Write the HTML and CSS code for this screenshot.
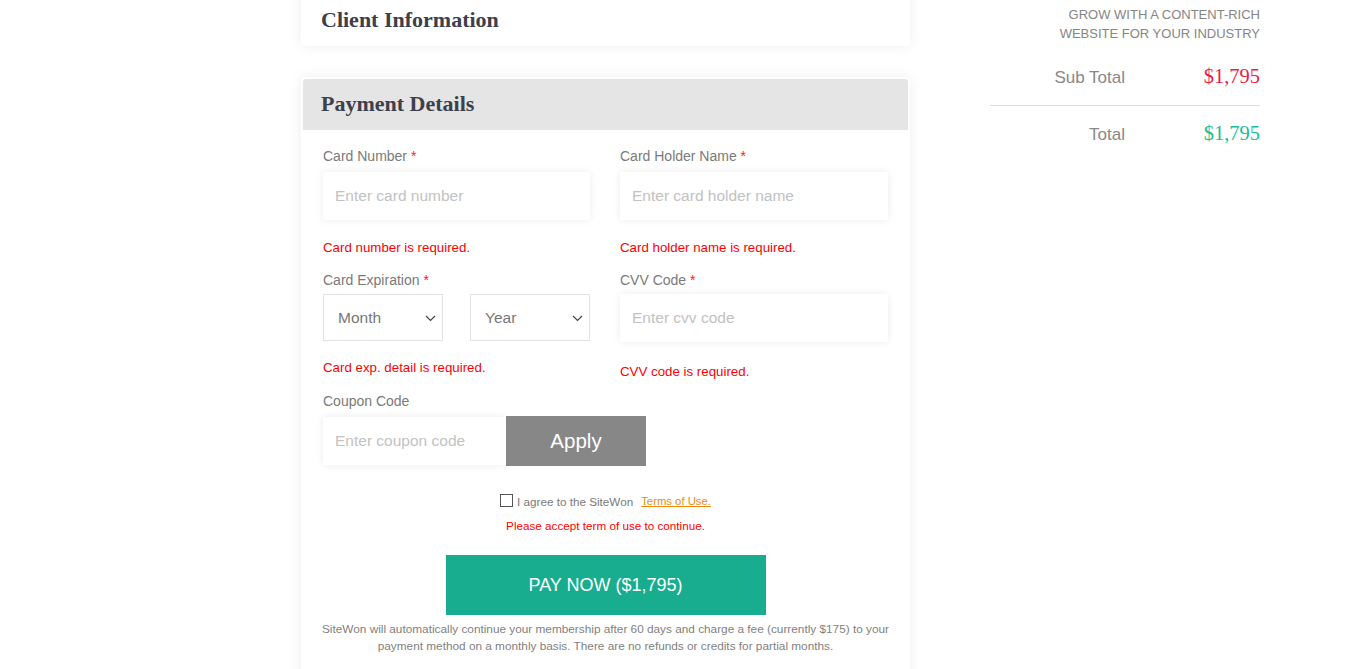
FILE: index.html
```html
<!DOCTYPE html>
<html lang="en">
<head>
<meta charset="utf-8">
<title>Checkout - Payment</title>
<link rel="stylesheet" href="styles.css">
</head>
<body>
<div class="page">
  <div class="main-col">
    <section class="card client-card">
      <h2 class="card-title">Client Information</h2>
    </section>

    <section class="card pay-card">
      <div class="pay-head">
        <h2 class="card-title">Payment Details</h2>
      </div>
      <div class="pay-body">
        <div class="grid">
          <div class="field">
            <label class="label">Card Number <span class="req">*</span></label>
            <input class="input" type="text" placeholder="Enter card number">
            <div class="error">Card number is required.</div>
          </div>
          <div class="field">
            <label class="label">Card Holder Name <span class="req">*</span></label>
            <input class="input" type="text" placeholder="Enter card holder name">
            <div class="error">Card holder name is required.</div>
          </div>
          <div class="field">
            <label class="label label-tight">Card Expiration <span class="req">*</span></label>
            <div class="selects">
              <div class="select">
                <span>Month</span>
                <svg class="chev" width="11" height="7" viewBox="0 0 11 7"><path d="M1 1 L5.5 5.5 L10 1" fill="none" stroke="#444" stroke-width="1.2"/></svg>
              </div>
              <div class="select">
                <span>Year</span>
                <svg class="chev" width="11" height="7" viewBox="0 0 11 7"><path d="M1 1 L5.5 5.5 L10 1" fill="none" stroke="#444" stroke-width="1.2"/></svg>
              </div>
            </div>
            <div class="error error-sel">Card exp. detail is required.</div>
          </div>
          <div class="field">
            <label class="label label-tight">CVV Code <span class="req">*</span></label>
            <input class="input" type="text" placeholder="Enter cvv code">
            <div class="error error-cvv">CVV code is required.</div>
          </div>
        </div>

        <div class="coupon">
          <label class="label label-coupon">Coupon Code</label>
          <div class="coupon-row">
            <input class="input coupon-input" type="text" placeholder="Enter coupon code">
            <button class="apply" type="button">Apply</button>
          </div>
        </div>

        <div class="agree">
          <span class="box"></span>
          <span class="agree-text">I agree to the SiteWon</span>
          <a class="terms" href="#">Terms of Use.</a>
        </div>
        <div class="agree-error">Please accept term of use to continue.</div>

        <button class="pay-btn" type="button">PAY NOW ($1,795)</button>
        <p class="note">SiteWon will automatically continue your membership after 60 days and charge a fee (currently $175) to your<br>payment method on a monthly basis. There are no refunds or credits for partial months.</p>
      </div>
    </section>
  </div>

  <aside class="side-col">
    <div class="plan">GROW WITH A CONTENT-RICH<br>WEBSITE FOR YOUR INDUSTRY</div>
    <div class="sum-row">
      <span class="sum-label">Sub Total</span>
      <span class="price price-sub">$1,795</span>
    </div>
    <div class="sum-row">
      <span class="sum-label">Total</span>
      <span class="price price-total">$1,795</span>
    </div>
  </aside>
</div>
</body>
</html>
```

FILE: styles.css
```css
* { box-sizing: border-box; }

html, body {
  margin: 0;
  padding: 0;
  background: #ffffff;
  font-family: "Liberation Sans", Arial, sans-serif;
  color: #777777;
  overflow: hidden;
}

.page {
  display: flex;
  align-items: flex-start;
  padding-left: 301px;
  gap: 80px;
  height: 669px;
}

.main-col {
  width: 609px;
  display: flex;
  flex-direction: column;
}

.card {
  background: #ffffff;
  border-radius: 4px;
  box-shadow: 0 0 14px rgba(0, 0, 0, 0.07);
}

.card-title {
  margin: 0;
  font-family: "Liberation Serif", "Times New Roman", serif;
  font-weight: bold;
  font-size: 22px;
  line-height: 26px;
  color: #3c404c;
}

.client-card {
  margin-top: -10px;
  padding: 17px 20px 13px;
}

.pay-card {
  margin-top: 31px;
  padding: 2px 2px 0;
}

.pay-head {
  background: #e5e5e5;
  border-radius: 3px 3px 0 0;
  padding: 12px 18px 13px;
}

.pay-body {
  padding: 16px 20px 30px;
}

.grid {
  display: grid;
  grid-template-columns: 267px 268px;
  column-gap: 30px;
  row-gap: 13px;
}

.field {
  display: flex;
  flex-direction: column;
}

.label {
  display: block;
  font-size: 14px;
  line-height: 20px;
  color: #7a7a7a;
  margin-bottom: 6px;
}

.label-tight { margin-bottom: 4px; }
.label-coupon { margin-bottom: 5px; }

.req { color: #ff1a1a; }

.input {
  display: block;
  width: 100%;
  height: 48px;
  border: none;
  outline: none;
  background: #ffffff;
  box-shadow: 0 0 8px rgba(0, 0, 0, 0.08);
  padding: 0 12px;
  font-family: "Liberation Sans", Arial, sans-serif;
  font-size: 15.5px;
  color: #555;
}

.input::placeholder { color: #c2c2c2; }

.error {
  margin-top: 19px;
  font-size: 13.3px;
  line-height: 18px;
  color: #ff0000;
}

.error-sel { margin-top: 18px; }
.error-cvv { margin-top: 21px; }

.selects {
  display: flex;
  justify-content: space-between;
}

.select {
  width: 120px;
  height: 47px;
  border: 1px solid #e2e2e2;
  display: flex;
  align-items: center;
  justify-content: space-between;
  padding: 0 6px 0 14px;
  font-size: 15.5px;
  color: #777777;
}

.chev { display: block; margin-top: 2px; }

.coupon { margin-top: 10px; }

.coupon-row {
  display: flex;
  align-items: center;
}

.coupon-input { width: 183px; }

.apply {
  width: 140px;
  height: 50px;
  border: none;
  background: #878787;
  color: #ffffff;
  font-family: "Liberation Sans", Arial, sans-serif;
  font-size: 20.5px;
  padding: 0;
}

.agree {
  margin-top: 27px;
  display: flex;
  justify-content: center;
  align-items: center;
  height: 16px;
  font-size: 11.7px;
}

.box {
  width: 13px;
  height: 13px;
  border: 1px solid #555;
  background: #fff;
  margin-right: 4px;
  margin-top: -2px;
}

.agree-text { color: #7a7a7a; }

.terms {
  margin-left: 8px;
  color: #ee8a12;
  font-size: 11.3px;
  text-decoration: underline;
}

.agree-error {
  margin-top: 9px;
  text-align: center;
  font-size: 11.7px;
  line-height: 16px;
  color: #ff0000;
}

.pay-btn {
  display: block;
  margin: 21px auto 0;
  width: 320px;
  height: 60px;
  border: none;
  background: #17ad8e;
  color: #ffffff;
  font-family: "Liberation Sans", Arial, sans-serif;
  font-size: 18px;
  padding: 0;
}

.note {
  margin: 6px -4px 0;
  text-align: center;
  font-size: 11.8px;
  line-height: 17px;
  color: #7f7f7f;
}

.side-col {
  width: 270px;
  padding-top: 5px;
}

.plan {
  text-align: right;
  font-size: 13px;
  line-height: 19px;
  color: #858585;
  margin-bottom: 6px;
}

.sum-row {
  display: grid;
  grid-template-columns: 1fr 135px;
  align-items: baseline;
  padding: 15px 0;
}

.sum-row + .sum-row {
  border-top: 1px solid #dddddd;
}

.sum-label {
  text-align: right;
  font-size: 17px;
  line-height: 24px;
  color: #888888;
}

.price {
  text-align: right;
  font-family: "Liberation Serif", "Times New Roman", serif;
  font-size: 20.5px;
  line-height: 24px;
}

.price-sub { color: #ec1a48; }
.price-total { color: #1bbc98; }
```
